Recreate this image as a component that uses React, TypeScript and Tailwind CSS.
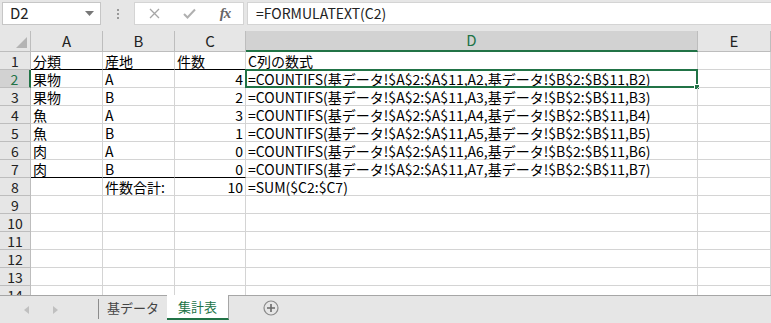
import React from "react";

const FONT = "font-['Noto_Sans_CJK_JP','Noto_Sans',sans-serif]";

const colWidths = ["w-[72px]", "w-[72px]", "w-[71px]", "w-[452px]", "w-[73px]"];
const colNames = ["A", "B", "C", "D", "E"];

type Row = { a?: string; b?: string; c?: string; d?: string; underline?: boolean };

const f = (n: number) =>
  `=COUNTIFS(基データ!$A$2:$A$11,A${n},基データ!$B$2:$B$11,B${n})`;

const rows: Row[] = [
  { a: "分類", b: "産地", c: "件数", d: "C列の数式", underline: true },
  { a: "果物", b: "A", c: "4", d: f(2) },
  { a: "果物", b: "B", c: "2", d: f(3) },
  { a: "魚", b: "A", c: "3", d: f(4) },
  { a: "魚", b: "B", c: "1", d: f(5) },
  { a: "肉", b: "A", c: "0", d: f(6) },
  { a: "肉", b: "B", c: "0", d: f(7), underline: true },
  { b: "件数合計:", c: "10", d: "=SUM($C2:$C7)" },
  {},
  {},
  {},
  {},
  {},
  {},
];

function FormulaBar() {
  return (
    <div className="h-[31px] bg-[#e6e6e6] flex items-start pt-[2px] pl-[2px]">
      <div className="w-[99px] h-[23px] bg-white border border-[#c6c6c6] flex items-center justify-between pl-[7px] pr-[6px] text-[15px] text-[#222]">
        <span>D2</span>
        <svg width="9" height="5" viewBox="0 0 9 5">
          <path d="M0 0H9L4.5 5Z" fill="#777" />
        </svg>
      </div>
      <div className="w-[33px] h-[23px] flex flex-col items-center justify-center gap-[2px]">
        <span className="w-[2px] h-[2px] bg-[#999]" />
        <span className="w-[2px] h-[2px] bg-[#999]" />
        <span className="w-[2px] h-[2px] bg-[#999]" />
      </div>
      <div className="w-[110px] h-[23px] bg-white border border-[#d4d4d4] flex items-center">
        <div className="w-[36px] flex justify-center pl-[2px]">
          <svg width="11" height="11" viewBox="0 0 11 11">
            <path d="M1 1L10 10M10 1L1 10" stroke="#a6a6a6" strokeWidth="1.3" />
          </svg>
        </div>
        <div className="w-[36px] flex justify-center">
          <svg width="13" height="11" viewBox="0 0 13 11">
            <path d="M1 6L4.5 9.5L12 1.5" stroke="#b0b0b0" strokeWidth="2" fill="none" />
          </svg>
        </div>
        <div className="w-[36px] flex justify-center">
          <span className="font-['Liberation_Serif',serif] italic font-bold text-[15px] text-[#666] leading-none tracking-[-1px]">
            fx
          </span>
        </div>
      </div>
      <div className="flex-1 ml-[3px] h-[23px] bg-white border border-[#d4d4d4] border-r-0 flex items-center pl-[8px] text-[14px] text-[#222]">
        =FORMULATEXT(C2)
      </div>
    </div>
  );
}

function HeaderRow() {
  return (
    <div className="flex h-[21px]">
      <div className="w-[31px] h-full bg-[#e6e6e6] border-r border-b border-[#bdbdbd] relative">
        <svg className="absolute right-[3px] bottom-[3px]" width="11" height="11" viewBox="0 0 11 11">
          <path d="M11 0V11H0Z" fill="#b4b4b4" />
        </svg>
      </div>
      {colNames.map((n, i) =>
        n === "D" ? (
          <div
            key={n}
            className={`${colWidths[i]} h-full bg-[#d2d2d2] border-r border-[#bdbdbd] border-b-2 border-b-[#217346] flex items-center justify-center text-[#217346] text-[15px]`}
          >
            {n}
          </div>
        ) : (
          <div
            key={n}
            className={`${colWidths[i]} h-full bg-[#e6e6e6] border-r border-b border-[#bdbdbd] flex items-center justify-center text-[15px] text-[#222]`}
          >
            {n}
          </div>
        )
      )}
    </div>
  );
}

function Cell({
  w,
  text,
  right,
  underline,
  children,
}: {
  w: string;
  text?: string;
  right?: boolean;
  underline?: boolean;
  children?: React.ReactNode;
}) {
  return (
    <div
      className={`${w} h-full relative border-r border-[#d4d4d4] flex items-center pt-px whitespace-nowrap overflow-visible ${
        underline ? "border-b border-b-black" : "border-b border-b-[#d4d4d4]"
      } ${right ? "justify-end pr-[2px]" : "pl-[2px]"}`}
    >
      {text}
      {children}
    </div>
  );
}

function Grid() {
  return (
    <div className="h-[264px] overflow-hidden bg-white">
      <HeaderRow />
      {rows.map((r, idx) => {
        const num = idx + 1;
        const sel = num === 2;
        return (
          <div key={num} className="flex h-[18px] text-[14px] leading-none text-black">
            <div
              className={`w-[31px] h-full flex items-center justify-center pt-px border-b border-[#bdbdbd] ${
                sel
                  ? "bg-[#d2d2d2] text-[#217346] border-r-2 border-r-[#217346]"
                  : "bg-[#e6e6e6] text-[#222] border-r border-r-[#bdbdbd]"
              }`}
            >
              {num}
            </div>
            <Cell w={colWidths[0]} text={r.a} underline={r.underline} />
            <Cell w={colWidths[1]} text={r.b} underline={r.underline} />
            <Cell w={colWidths[2]} text={r.c} right={num > 1} underline={r.underline} />
            <Cell w={colWidths[3]} text={r.d}>
              {sel && (
                <div className="absolute -left-[1px] -top-[1px] -right-[1px] -bottom-[1px] border-2 border-[#217346] pointer-events-none">
                  <span className="absolute -right-[4px] -bottom-[4px] w-[6px] h-[6px] bg-[#217346] border border-white" />
                </div>
              )}
            </Cell>
            <Cell w={colWidths[4]} />
          </div>
        );
      })}
    </div>
  );
}

function SheetTabs() {
  return (
    <div className="h-[28px] bg-[#e6e6e6] flex items-start text-[13px] border-t border-[#a6a6a6]">
      <div className="w-[98px] h-full flex items-center">
        <svg className="ml-[24px]" width="5" height="8" viewBox="0 0 5 8">
          <path d="M5 0V8L0 4Z" fill="#c0c0c0" />
        </svg>
        <svg className="ml-[24px]" width="5" height="8" viewBox="0 0 5 8">
          <path d="M0 0V8L5 4Z" fill="#c0c0c0" />
        </svg>
      </div>
      <div className="h-[20px] mt-[3px] border-l border-[#8c8c8c]" />
      <div className="w-[68px] h-[24px] flex items-center justify-center text-[#444]">基データ</div>
      <div className="w-[62px] h-[25px] -mt-px bg-white border-r border-[#a6a6a6] border-b-2 border-b-[#217346] flex items-center justify-center text-[#217346]">
        集計表
      </div>
      <div className="ml-[34px] h-[24px] flex items-center">
        <svg width="16" height="16" viewBox="0 0 16 16">
          <circle cx="8" cy="8" r="7" stroke="#8a8a8a" strokeWidth="1.2" fill="none" />
          <path d="M8 4V12M4 8H12" stroke="#6a6a6a" strokeWidth="1.6" />
        </svg>
      </div>
    </div>
  );
}

export default function App() {
  return (
    <div className={`w-[771px] h-[323px] overflow-hidden flex flex-col ${FONT}`}>
      <FormulaBar />
      <Grid />
      <SheetTabs />
    </div>
  );
}
